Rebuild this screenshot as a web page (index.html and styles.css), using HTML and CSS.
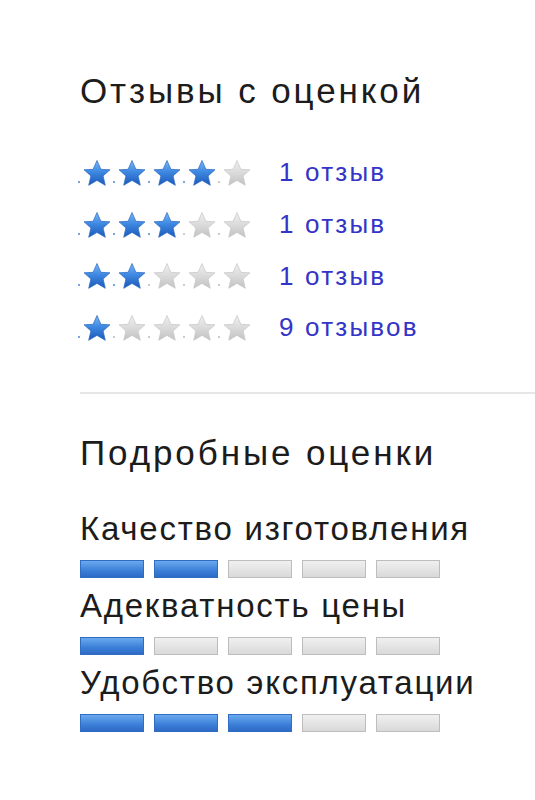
FILE: index.html
```html
<!DOCTYPE html>
<html>
  <head>
    <title>Отзывы</title>
    <link rel="stylesheet" href="styles.css">
  </head>
  <body>
    <svg class="defs" width="0" height="0">
      <defs>
        <linearGradient id="gBlue" x1="0" y1="0" x2="0" y2="1">
          <stop offset="0" stop-color="#78b8f7"/>
          <stop offset="0.45" stop-color="#3f89e2"/>
          <stop offset="1" stop-color="#1a58b8"/>
        </linearGradient>
        <linearGradient id="gGrey" x1="0" y1="0" x2="0" y2="1">
          <stop offset="0" stop-color="#f0f0f0"/>
          <stop offset="0.5" stop-color="#dadada"/>
          <stop offset="1" stop-color="#c2c2c2"/>
        </linearGradient>
        <path id="star" d="M14 1.5 L17.9 10.3 L27 10.8 L20.1 16.9 L22.3 26.3 L14 21.4 L5.7 26.3 L7.9 16.9 L1 10.8 L10.1 10.3 Z"/>
      </defs>
    </svg>

    <section class="block">
      <h2>Отзывы с оценкой</h2>
      <ul class="ratings">
        <li>
          <span class="stars">
            <i class="on"></i><svg class="on" viewBox="0 0 28 28"><use href="#star"/></svg>
            <i class="on"></i><svg class="on" viewBox="0 0 28 28"><use href="#star"/></svg>
            <i class="on"></i><svg class="on" viewBox="0 0 28 28"><use href="#star"/></svg>
            <i class="on"></i><svg class="on" viewBox="0 0 28 28"><use href="#star"/></svg>
            <i></i><svg viewBox="0 0 28 28"><use href="#star"/></svg>
          </span>
          <a href="#">1 отзыв</a>
        </li>
        <li>
          <span class="stars">
            <i class="on"></i><svg class="on" viewBox="0 0 28 28"><use href="#star"/></svg>
            <i class="on"></i><svg class="on" viewBox="0 0 28 28"><use href="#star"/></svg>
            <i class="on"></i><svg class="on" viewBox="0 0 28 28"><use href="#star"/></svg>
            <i></i><svg viewBox="0 0 28 28"><use href="#star"/></svg>
            <i></i><svg viewBox="0 0 28 28"><use href="#star"/></svg>
          </span>
          <a href="#">1 отзыв</a>
        </li>
        <li>
          <span class="stars">
            <i class="on"></i><svg class="on" viewBox="0 0 28 28"><use href="#star"/></svg>
            <i class="on"></i><svg class="on" viewBox="0 0 28 28"><use href="#star"/></svg>
            <i></i><svg viewBox="0 0 28 28"><use href="#star"/></svg>
            <i></i><svg viewBox="0 0 28 28"><use href="#star"/></svg>
            <i></i><svg viewBox="0 0 28 28"><use href="#star"/></svg>
          </span>
          <a href="#">1 отзыв</a>
        </li>
        <li>
          <span class="stars">
            <i class="on"></i><svg class="on" viewBox="0 0 28 28"><use href="#star"/></svg>
            <i></i><svg viewBox="0 0 28 28"><use href="#star"/></svg>
            <i></i><svg viewBox="0 0 28 28"><use href="#star"/></svg>
            <i></i><svg viewBox="0 0 28 28"><use href="#star"/></svg>
            <i></i><svg viewBox="0 0 28 28"><use href="#star"/></svg>
          </span>
          <a href="#">9 отзывов</a>
        </li>
      </ul>
    </section>

    <hr class="divider">

    <section class="block">
      <h2>Подробные оценки</h2>
      <div class="aspect">
        <div class="aspect-name">Качество изготовления</div>
        <div class="bars"><b class="on"></b><b class="on"></b><b></b><b></b><b></b></div>
      </div>
      <div class="aspect">
        <div class="aspect-name">Адекватность цены</div>
        <div class="bars"><b class="on"></b><b></b><b></b><b></b><b></b></div>
      </div>
      <div class="aspect">
        <div class="aspect-name">Удобство эксплуатации</div>
        <div class="bars"><b class="on"></b><b class="on"></b><b class="on"></b><b></b><b></b></div>
      </div>
    </section>
  </body>
</html>
```

FILE: styles.css
```css
body{
  margin:0;
  font-family: "Liberation Sans", Arial, sans-serif;
  color:#1c1c1c;
  background:#fff;
}
.defs{
  position:absolute;
}
.block{
  padding-left:80px;
}
h2{
  font-size:35px;
  font-weight:normal;
  letter-spacing:2.9px;
  line-height:38px;
  margin:0;
}
.block:first-of-type h2{
  padding-top:72px;
}
.ratings{
  list-style:none;
  margin:37px 0 0;
  padding:0;
}
.ratings li{
  display:flex;
  align-items:center;
  height:51.7px;
  margin-left:-4px;
}
.stars{
  display:flex;
  align-items:flex-end;
  width:203px;
}
.stars i{
  width:2px;
  height:2px;
  margin:0 3px 4px 2px;
  background:#bbb;
  border-radius:1px;
}
.stars i.on{
  background:#4a88d8;
}
.stars svg{
  width:28px;
  height:28px;
  fill:url(#gGrey);
  stroke:#c6c6c6;
  stroke-width:0.7;
  stroke-linejoin:round;
}
.stars svg.on{
  fill:url(#gBlue);
  stroke:#2a66c2;
}
.ratings a{
  font-size:26px;
  letter-spacing:2.2px;
  color:#3434c6;
  text-decoration:none;
}
.divider{
  border:0;
  border-top:2px solid #e6e6e6;
  margin:38px 0 40px 80px;
}
.aspect{
  margin-bottom:10px;
}
.aspect-name{
  font-size:33px;
  letter-spacing:1.75px;
  line-height:36px;
}
.block .aspect:first-of-type{
  margin-top:39px;
}
.bars{
  display:flex;
  gap:10px;
  margin-top:13px;
}
.bars b{
  width:64px;
  height:18px;
  box-sizing:border-box;
  border:1px solid #bdbdbd;
  background:linear-gradient(#f0f0f0, #d9d9d9);
}
.bars b.on{
  border-color:#2f6cc2;
  background:linear-gradient(#6aa9ee, #3b7fd8 60%, #2d6ac6);
}
```
